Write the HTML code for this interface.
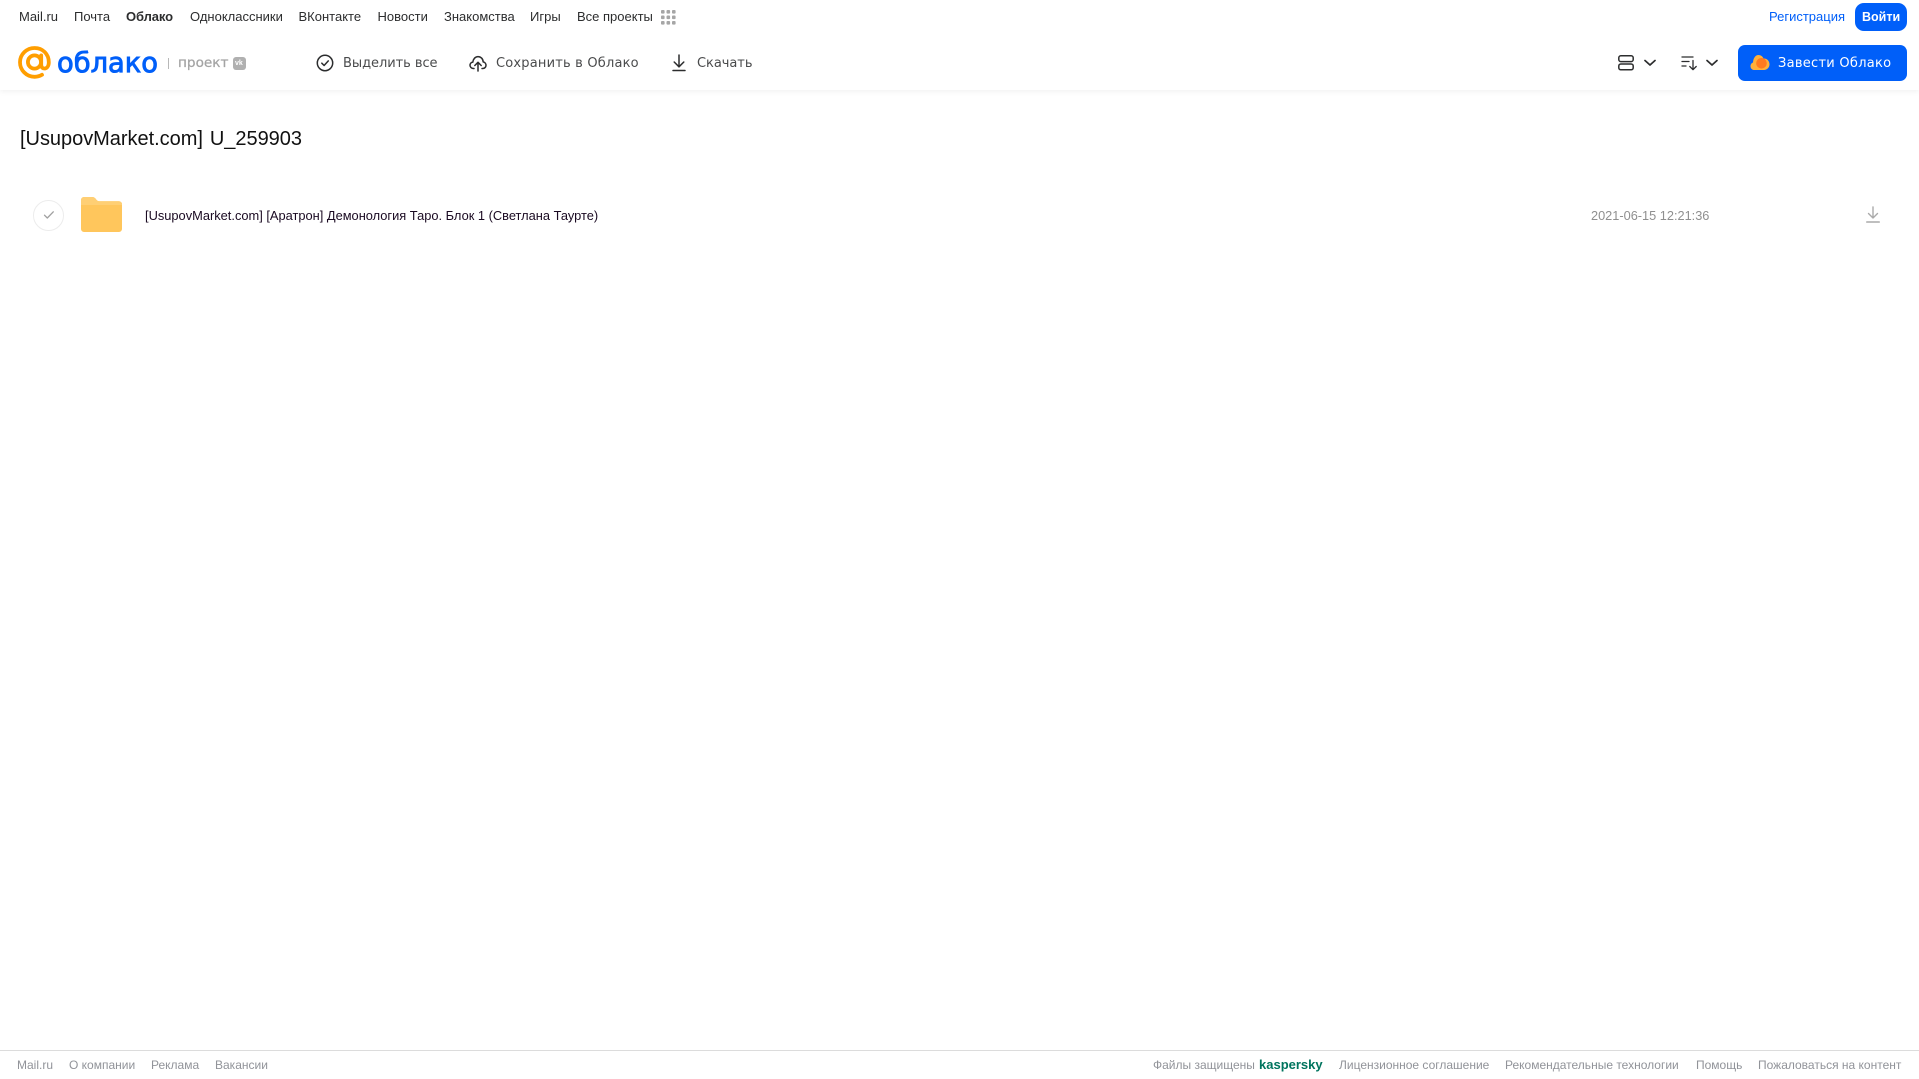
<!DOCTYPE html>
<html lang="ru">
<head>
<meta charset="utf-8">
<title>Облако</title>
<style>
html,body{margin:0;padding:0;background:#fff;}
body{position:relative;width:1919px;height:1079px;overflow:hidden;font-family:"Liberation Sans",Arial,sans-serif;color:#2c2d2e;}
.t{position:absolute;white-space:nowrap;line-height:16px;}
.top{font-size:13px;top:9px;color:#2c2d2e;}
.tool{top:56px;color:#4a4b4c;font-family:"DejaVu Sans",sans-serif;font-size:13px;letter-spacing:-.05px;}
.foot{font-size:12px;top:1057px;color:#919399;}
svg{position:absolute;overflow:visible;}
#hdr{position:absolute;left:0;top:0;width:1919px;height:90px;background:#fff;box-shadow:0 1px 6px rgba(0,0,0,.07);}
</style>
</head>
<body>
<div id="hdr"></div>

<span class="t top" style="left:19px">Mail.ru</span>
<span class="t top" style="left:74px">Почта</span>
<span class="t top" style="left:126px;font-weight:bold;letter-spacing:-.1px">Облако</span>
<span class="t top" style="left:190px">Одноклассники</span>
<span class="t top" style="left:298.500px">ВКонтакте</span>
<span class="t top" style="left:377.500px">Новости</span>
<span class="t top" style="left:444px">Знакомства</span>
<span class="t top" style="left:530px">Игры</span>
<span class="t top" style="left:577px">Все проекты</span>
<svg style="left:661px;top:10px" width="15" height="15" fill="#a6a6a6">
<rect x="0" y="0" width="3.6" height="3.6" rx="1"/><rect x="5.5" y="0" width="3.6" height="3.6" rx="1"/><rect x="11" y="0" width="3.6" height="3.6" rx="1"/>
<rect x="0" y="5.5" width="3.6" height="3.6" rx="1"/><rect x="5.5" y="5.5" width="3.6" height="3.6" rx="1"/><rect x="11" y="5.5" width="3.6" height="3.6" rx="1"/>
<rect x="0" y="11" width="3.6" height="3.6" rx="1"/><rect x="5.5" y="11" width="3.6" height="3.6" rx="1"/><rect x="11" y="11" width="3.6" height="3.6" rx="1"/>
</svg>

<span class="t top" style="left:1769px;color:#005ff9">Регистрация</span>
<div style="position:absolute;left:1855px;top:3px;width:52px;height:28px;border-radius:9px;background:#005ff9"></div>
<span class="t" style="left:1862px;top:9px;font-size:12.5px;color:#fff;font-weight:bold">Войти</span>

<!-- logo -->
<svg style="left:18px;top:46px" width="34" height="34" viewBox="0 0 34 34" fill="none">
<circle cx="16.5" cy="16" r="6.6" stroke="#ff9e00" stroke-width="3.8"/>
<path d="M23.2 9.4v9.4c0 5.4 7.6 5.2 7.6-2.6 0-8-6-14.2-14.2-14.2C8.6 2 2 8.400 2 16.200c0 8 6.500 14.600 14.600 14.600 3 0 5.400-.8 7.400-2" stroke="#ff9e00" stroke-width="3.800" stroke-linecap="round"/>
</svg>
<svg style="left:56px;top:44px" width="106" height="36">
<text x="1" y="28" font-family="'DejaVu Sans',sans-serif" font-size="28" fill="#005ff9" stroke="#005ff9" stroke-width=".9" textLength="101" lengthAdjust="spacingAndGlyphs">облако</text>
</svg>
<div style="position:absolute;left:168px;top:58px;width:1px;height:11px;background:#b8b8b8"></div>
<svg style="left:178px;top:53px" width="52" height="18">
<text x="0" y="14" font-family="'DejaVu Sans',sans-serif" font-size="13" fill="#a4a4a4" stroke="#a4a4a4" stroke-width=".25" textLength="50.500" lengthAdjust="spacingAndGlyphs">проект</text>
</svg>
<div style="position:absolute;left:233px;top:57px;width:13px;height:13px;border-radius:3px;background:#b0b0b0"></div>
<span class="t" style="left:235px;top:59px;font-size:7px;line-height:9px;font-weight:bold;color:#fff">vk</span>

<!-- toolbar -->
<svg style="left:316px;top:54px" width="18" height="18" fill="none" stroke="#2c2d2e" stroke-width="1.5">
<circle cx="9" cy="9" r="7.7"/><path d="M5.800 9.200l2.300 2.300 4.200-4.600" stroke-linecap="round" stroke-linejoin="round"/>
</svg>
<span class="t tool" style="left:343px">Выделить все</span>

<svg style="left:469px;top:54px" width="18" height="18" fill="none" stroke="#2c2d2e" stroke-width="1.5" stroke-linecap="round" stroke-linejoin="round">
<path d="M5 14.500H4.200C2.400 14.500 1 13 1 11.300c0-1.600 1.200-3 2.800-3.200C4.200 5 6.300 2.600 9 2.600c2.800 0 5 2.200 5.200 5.300 1.600.3 2.800 1.700 2.800 3.400 0 1.800-1.400 3.200-3.200 3.200H13"/>
<path d="M9 17V8.500M5.800 11.500L9 8.300l3.200 3.200"/>
</svg>
<span class="t tool" style="left:496px;letter-spacing:.19px">Сохранить в Облако</span>

<svg style="left:672px;top:54px" width="14" height="18" fill="none" stroke="#2c2d2e" stroke-width="1.5" stroke-linecap="round" stroke-linejoin="round">
<path d="M7 1v11.500M2.200 8L7 12.800 11.800 8"/><path d="M1 16.500h12"/>
</svg>
<span class="t tool" style="left:697px">Скачать</span>

<svg style="left:1618px;top:55px" width="16" height="16" fill="none" stroke="#2c2d2e" stroke-width="1.500">
<rect x=".8" y=".8" width="14.400" height="5.800" rx="2"/><rect x=".8" y="9" width="14.400" height="5.800" rx="2"/>
</svg>
<svg style="left:1644px;top:59px" width="12" height="8" fill="none" stroke="#2c2d2e" stroke-width="1.700" stroke-linecap="round" stroke-linejoin="round"><path d="M1 1.500l5 4.500 5-4.500"/></svg>

<svg style="left:1681px;top:55px" width="17" height="16" fill="none" stroke="#2c2d2e" stroke-width="1.300" stroke-linecap="round" stroke-linejoin="round">
<path d="M1 2h11M1 6.500h7M1 11h4"/><path d="M12 5.500v9M8.800 11.500l3.200 3.200 3.200-3.200"/>
</svg>
<svg style="left:1706px;top:59px" width="12" height="8" fill="none" stroke="#2c2d2e" stroke-width="1.700" stroke-linecap="round" stroke-linejoin="round"><path d="M1 1.500l5 4.500 5-4.500"/></svg>

<div style="position:absolute;left:1738px;top:45px;width:169px;height:36px;border-radius:7px;background:#005ff9"></div>
<svg style="left:1750px;top:54px" width="20" height="17">
<path d="M4.500 16C2 16 .5 14.200.5 12.200c0-1.800 1.100-3.200 2.500-3.700C3.300 4 5.500 1 8.500 1c2.400 0 4.200 1.500 5 3.500 3.500-.3 6 2.500 6 5.800 0 3.200-2.400 5.700-5.500 5.700z" fill="#ffb03a"/>
<circle cx="11.500" cy="9.300" r="5.300" fill="#ff7a1f"/>
</svg>
<span class="t" style="left:1778px;top:56px;font-family:'DejaVu Sans',sans-serif;font-size:13px;letter-spacing:.27px;color:#fff">Завести Облако</span>

<!-- title -->
<span class="t" style="left:20px;top:125.500px;font-size:20px;line-height:26px;color:#111;word-spacing:1.500px;letter-spacing:-.03px">[UsupovMarket.com] U_259903</span>

<!-- row -->
<div style="position:absolute;left:33px;top:200px;width:29px;height:29px;border:1px solid #ececec;border-radius:50%;box-sizing:content-box"></div>
<svg style="left:43px;top:210px" width="12" height="10" fill="none" stroke="#a0a0a0" stroke-width="1.300" stroke-linecap="round" stroke-linejoin="round"><path d="M1.500 5.200l2.800 2.800 6-6.200"/></svg>
<svg style="left:81px;top:197px" width="41" height="35" viewBox="0 0 41 35" preserveAspectRatio="none">
<path d="M0 3a3 3 0 0 1 3-3h8c2 0 3 .8 4 2.300 1 1.400 1.800 2 3.500 2H38a3 3 0 0 1 3 3V32a3 3 0 0 1-3 3H3a3 3 0 0 1-3-3z" fill="#ffc65c"/>
<path d="M0 8h41V7.300a3 3 0 0 0-3-3H18.500c-1.700 0-2.500-.6-3.500-2C14 .8 13 0 11 0H3a3 3 0 0 0-3 3z" fill="#ffcf74"/>
</svg>
<span class="t" style="left:145px;top:208px;font-size:12.850px;color:#1a0a22">[UsupovMarket.com] [Аратрон] Демонология Таро. Блок 1 (Светлана Таурте)</span>
<span class="t" style="left:1591px;top:208px;font-size:12.750px;color:#8f8f8f">2021-06-15 12:21:36</span>
<svg style="left:1866px;top:206px" width="14" height="18" fill="none" stroke="#aaa" stroke-width="1.400" stroke-linecap="round" stroke-linejoin="round">
<path d="M7 1v10.500M2.500 7.500L7 12l4.500-4.500"/><path d="M.8 16h12.400" stroke-width="1.600"/>
</svg>

<!-- footer -->
<div style="position:absolute;left:0;top:1050px;width:1919px;height:1px;background:#dcdcdc"></div>
<span class="t foot" style="left:17px">Mail.ru</span>
<span class="t foot" style="left:69px">О компании</span>
<span class="t foot" style="left:151px">Реклама</span>
<span class="t foot" style="left:215px">Вакансии</span>
<span class="t foot" style="left:1153px">Файлы защищены</span>
<span class="t" style="left:1259px;top:1057px;font-size:13px;font-weight:bold;color:#00745e">kaspersky</span>
<span class="t foot" style="left:1339px">Лицензионное соглашение</span>
<span class="t foot" style="left:1505px">Рекомендательные технологии</span>
<span class="t foot" style="left:1696px">Помощь</span>
<span class="t foot" style="left:1758px">Пожаловаться на контент</span>
</body>
</html>
